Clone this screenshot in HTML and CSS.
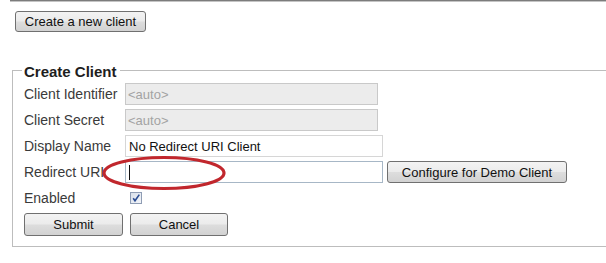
FILE: index.html
```html
<!DOCTYPE html>
<html>
<head>
<meta charset="utf-8">
<link rel="stylesheet" href="styles.css">
</head>
<body>
<div class="page">
  <div class="rule"></div>
  <button class="btn btn-create">Create a new client</button>
  <fieldset class="panel">
    <legend class="panel-title">Create Client</legend>
    <div class="form">
      <div class="label">Client Identifier</div>
      <div class="cell"><div class="field field-off">&lt;auto&gt;</div></div>

      <div class="label">Client Secret</div>
      <div class="cell"><div class="field field-off">&lt;auto&gt;</div></div>

      <div class="label">Display Name</div>
      <div class="cell"><div class="field field-on">No Redirect URI Client</div></div>

      <div class="label">Redirect URI</div>
      <div class="cell cell-row">
        <div class="field field-on field-focus"><span class="caret"></span></div>
        <button class="btn btn-demo">Configure for Demo Client</button>
      </div>

      <div class="label">Enabled</div>
      <div class="cell">
        <span class="check">
          <svg width="10" height="10" viewBox="0 0 10 10"><path d="M2.2 5.2 L4 7.8 L8.3 1.6" fill="none" stroke="#2a4c93" stroke-width="1.6"/></svg>
        </span>
      </div>
    </div>
    <div class="actions">
      <button class="btn btn-submit">Submit</button>
      <button class="btn btn-cancel">Cancel</button>
    </div>
  </fieldset>
  <svg class="annotation" width="606" height="263" viewBox="0 0 606 263">
    <ellipse cx="164" cy="173" rx="60" ry="15.5" fill="none" stroke="#c1272d" stroke-width="3.2"/>
  </svg>
</div>
</body>
</html>
```
FILE: styles.css
```css
html, body {
  margin: 0;
  padding: 0;
  background: #ffffff;
  overflow: hidden;
}
body {
  width: 606px;
  height: 263px;
  font-family: "Liberation Sans", Arial, sans-serif;
}
.page {
  position: relative;
  width: 606px;
  height: 263px;
}
.rule {
  margin-left: 10px;
  width: 596px;
  height: 2px;
  background: linear-gradient(#7c7c7c, #7c7c7c 50%, #c4c4c4 50%);
}
.btn {
  display: block;
  box-sizing: border-box;
  margin: 0;
  padding: 0;
  border: 1px solid #707070;
  border-radius: 3px;
  background: linear-gradient(#f3f3f3 0%, #ebebeb 48%, #dddddd 52%, #d2d2d2 100%);
  font-family: "Liberation Sans", Arial, sans-serif;
  font-size: 13px;
  color: #111;
  text-align: center;
  line-height: 1;
}
.btn-create {
  margin: 9px 0 0 15px;
  width: 131px;
  height: 21px;
}
.panel {
  margin: 29px -6px 0 12px;
  padding: 4px 0 10px 11px;
  border: 1px solid #bdbdbd;
  min-width: 0;
}
.panel-title {
  margin-left: -2px;
  padding: 4px 3px 0 2px;
  font-size: 15px;
  font-weight: bold;
  line-height: 14px;
  color: #1e1e1e;
}
.form {
  display: grid;
  grid-template-columns: 101px 1fr;
  grid-auto-rows: 22px;
  row-gap: 4px;
}
.label {
  display: flex;
  align-items: center;
  font-size: 14px;
  color: #3a3a3a;
  white-space: nowrap;
}
.cell {
  display: flex;
  align-items: center;
}
.cell-row {
  gap: 4px;
}
.field {
  box-sizing: border-box;
  height: 22px;
  display: flex;
  align-items: center;
  padding-left: 3px;
  font-size: 13px;
  color: #111;
}
.field-off {
  width: 253px;
  background: #ececec;
  border: 1px solid #c9c9c9;
  color: #a3a3a3;
  padding-left: 2px;
}
.field-on {
  width: 258px;
  background: #ffffff;
  border: 1px solid #d6d6d6;
}
.field-focus {
  border-color: #a7b7c6;
}
.caret {
  display: block;
  width: 1px;
  height: 15px;
  background: #111;
}
.btn-demo {
  width: 180px;
  height: 22px;
}
.check {
  box-sizing: border-box;
  margin-left: 5px;
  width: 12px;
  height: 12px;
  border: 1px solid #8f9db4;
  background: linear-gradient(135deg, #d9e0ea, #f3f5f9);
  display: flex;
  align-items: center;
  justify-content: center;
}
.check svg {
  display: block;
}
.actions {
  display: flex;
  gap: 7px;
  margin-top: 4px;
}
.btn-submit {
  width: 99px;
  height: 23px;
}
.btn-cancel {
  width: 98px;
  height: 23px;
}
.annotation {
  position: absolute;
  left: 0;
  top: 0;
  pointer-events: none;
}
```
